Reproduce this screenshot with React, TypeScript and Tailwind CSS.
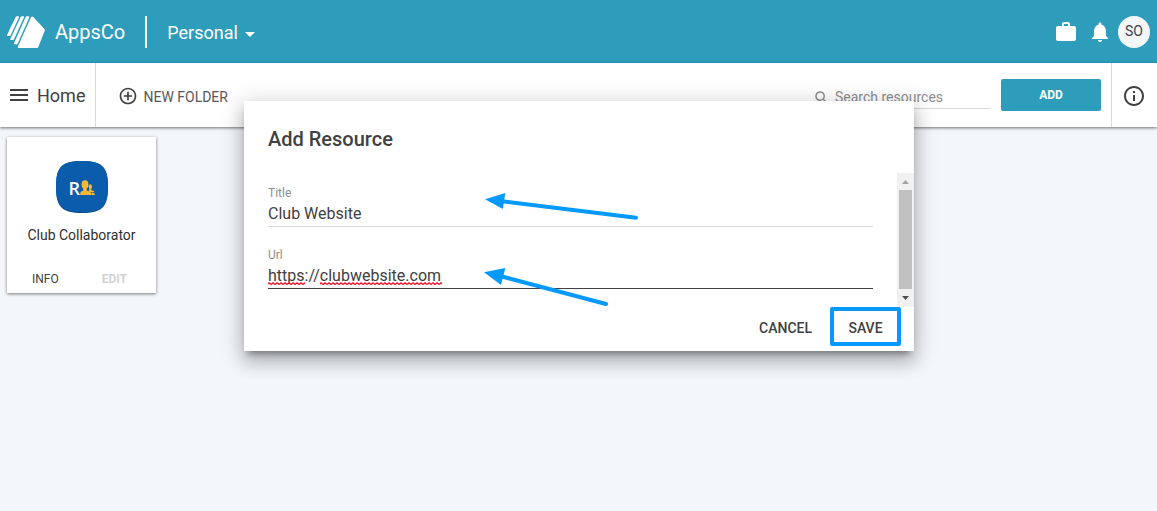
import { useState } from "react";
import type { ReactNode } from "react";

function Icon({ d, className }: { d: string; className: string }) {
  return (
    <svg viewBox="0 0 24 24" fill="currentColor" aria-hidden="true" className={className}>
      <path d={d} />
    </svg>
  );
}

const paths = {
  work: "M10 2h4c1.1 0 2 .89 2 2v2h4c1.11 0 2 .89 2 2v11c0 1.11-.89 2-2 2H4c-1.1 0-2-.89-2-2V8c0-1.1.9-2 2-2h4V4c0-1.11.89-2 2-2zm4 4V4h-4v2h4z",
  bell: "M12 22c1.1 0 2-.9 2-2h-4c0 1.1.89 2 2 2zm6-6v-5c0-3.07-1.64-5.64-4.5-6.32V4c0-.83-.67-1.5-1.5-1.5s-1.5.67-1.5 1.5v.68C7.63 5.36 6 7.92 6 11v5l-2 2v1h16v-1l-2-2z",
  menu: "M3 18h18v-2H3v2zm0-5h18v-2H3v2zm0-7v2h18V6H3z",
  addCircle:
    "M13 7h-2v4H7v2h4v4h2v-4h4v-2h-4V7zm-1-5C6.48 2 2 6.48 2 12s4.48 10 10 10 10-4.48 10-10S17.52 2 12 2zm0 18c-4.41 0-8-3.59-8-8s3.59-8 8-8 8 3.59 8 8-3.59 8-8 8z",
  info: "M11 17h2v-6h-2v6zm1-15C6.48 2 2 6.48 2 12s4.48 10 10 10 10-4.48 10-10S17.52 2 12 2zm0 18c-4.41 0-8-3.59-8-8s3.59-8 8-8 8 3.59 8 8-3.59 8-8 8zM11 9h2V7h-2v2z",
  search:
    "M15.5 14h-.79l-.28-.27C15.41 12.59 16 11.11 16 9.5 16 5.91 13.09 3 9.5 3S3 5.91 3 9.5 5.91 16 9.5 16c1.61 0 3.09-.59 4.23-1.57l.27.28v.79l5 4.99L20.49 19l-4.99-5zm-6 0C7.01 14 5 11.99 5 9.5S7.01 5 9.5 5 14 7.01 14 9.5 11.99 14 9.5 14z",
  dropDown: "M7 10l5 5 5-5z",
};

function Logo() {
  return (
    <svg viewBox="21 30 114 96" fill="#fff" aria-hidden="true" className="h-8 w-[38px]">
      <path d="M47 33q1-2 4-2h4q3 0 2 3L32 88q-1 2-3 2h-6q-3 0-2-3z" />
      <path d="M62 33q1-2 4-2h4q3 0 2 3L42 100q-1 2-3 2h-6q-3 0-2-3z" />
      <path d="M77 33q1-2 4-2h5q3 0 2 3L53 113q-1 2-3 2h-6q-3 0-2-3z" />
      <path d="M93 34q3-5 7-1l34 37q1 2 0 5l-19 48q-1 3-4 3H57q-5 0-3-5z" />
    </svg>
  );
}

function Header() {
  return (
    <header className="flex h-[63px] items-center bg-[#2e9dbb] px-[7px] text-white">
      <Logo />
      <span className="ml-[10px] text-[20px] leading-6">AppsCo</span>
      <div className="ml-5 h-8 w-[2px] bg-white" />
      <button type="button" className="ml-5 flex items-center pt-[2px] text-[18px] leading-6">
        Personal
        <Icon d={paths.dropDown} className="mt-[2px] h-6 w-6" />
      </button>
      <div className="ml-auto flex items-center">
        <button type="button" aria-label="Work">
          <Icon d={paths.work} className="h-6 w-6" />
        </button>
        <button type="button" aria-label="Notifications" className="ml-[10px]">
          <Icon d={paths.bell} className="h-6 w-6" />
        </button>
        <button
          type="button"
          className="ml-[6px] h-8 w-8 rounded-full bg-[#f3f7fa] text-[14px] text-[#414042]"
        >
          SO
        </button>
      </div>
    </header>
  );
}

function Toolbar() {
  return (
    <div className="flex h-16 bg-white shadow-[0_1px_3px_rgba(0,0,0,0.55)]">
      <div className="flex items-center border-r border-[#dadada] pr-[10px] pl-[7px]">
        <button type="button" className="flex items-center gap-[6px] text-[18px]">
          <Icon d={paths.menu} className="h-6 w-6" />
          Home
        </button>
      </div>
      <button type="button" className="ml-[22px] flex items-center gap-[5px] pt-[2px] text-[14px]">
        <Icon d={paths.addCircle} className="h-5 w-5" />
        <span className="pt-[2px] text-[#58575a]">NEW FOLDER</span>
      </button>
      <label className="mt-[22px] ml-auto flex h-6 w-[180px] items-center gap-1 border-b border-[#dadada] pt-[2px] pl-[2px] text-[#8d8d8e]">
        <Icon d={paths.search} className="h-[18px] w-[18px] shrink-0" />
        <input
          type="text"
          aria-label="Search resources"
          placeholder="Search resources"
          className="w-full min-w-0 bg-transparent text-[14px] outline-none placeholder:text-[#8d8d8e]"
        />
      </label>
      <button
        type="button"
        className="mt-4 ml-[10px] h-8 w-[100px] rounded-[2px] bg-[#2e9dbb] text-[12px] font-bold text-white"
      >
        ADD
      </button>
      <div className="ml-[10px] flex items-center border-l border-[#dadada] pt-[2px] pr-[11px] pl-[10px]">
        <button type="button" aria-label="Details">
          <Icon d={paths.info} className="h-6 w-6" />
        </button>
      </div>
    </div>
  );
}

function ResourceCard() {
  return (
    <article className="flex h-[156px] w-[149px] flex-col items-center bg-white pt-6 shadow-[0_1px_3px_rgba(0,0,0,0.5)]">
      <svg viewBox="0 0 52 52" aria-hidden="true" className="h-[52px] w-[52px]">
        <path d="M26 0C46 0 52 6 52 26S46 52 26 52 0 46 0 26 6 0 26 0z" fill="#084c8b" />
        <path d="M26 0C46 0 52 6 52 25.500S46 51 26 51 0 45.500 0 25.500 6 0 26 0z" fill="#0b5dab" />
        <text x="12.500" y="33.500" fill="#fff" fontSize="18" fontWeight="600" fontFamily="Open Sans, sans-serif">
          R
        </text>
        <g fill="#fdb92e">
          <ellipse cx="29" cy="23.500" rx="3.400" ry="4.300" />
          <path d="M27.300 25h3.400v4.500l3.300 1.200q1.500.8 1.500 3.300H24.300v-2q0-1.700 3-2.500z" />
          <ellipse cx="34.300" cy="25.600" rx="1.600" ry="2.300" />
          <path d="M33.400 26h1.800v3.200q3.400.6 3.600 2h-4.300l-1.900-1.300q.8-.8.800-2z" />
          <path d="M35.200 31.900h2.400q1.200.6 1.400 2.100h-3.400q0-1.300-.4-2.100z" />
        </g>
      </svg>
      <h2 className="mt-3 text-[14px] leading-5 text-[#303030]">Club Collaborator</h2>
      <div className="mt-6 flex w-full justify-between pr-[29px] pl-[25px] text-[12px] leading-5">
        <button type="button">INFO</button>
        <button type="button" disabled className="font-bold text-[#d3d3d3]">
          EDIT
        </button>
      </div>
    </article>
  );
}

function Field({
  id,
  label,
  value,
  focused,
  onChange,
  children,
}: {
  id: string;
  label: string;
  value: string;
  focused?: boolean;
  onChange: (value: string) => void;
  children?: ReactNode;
}) {
  return (
    <div
      className={
        focused
          ? "relative flex h-[54px] flex-col border-b border-[#414042]"
          : "relative flex h-[54px] flex-col border-b border-[#dadada]"
      }
    >
      <label htmlFor={id} className="pt-[10px] text-[12px] leading-5 text-[#8d8d8e]">
        {label}
      </label>
      <input
        id={id}
        type="text"
        value={value}
        onChange={(event) => onChange(event.target.value)}
        className="h-[22px] w-full bg-transparent text-[16px] leading-[22px] outline-none"
      />
      {children}
    </div>
  );
}

function SpellingMarks() {
  return (
    <svg aria-hidden="true" className="pointer-events-none absolute bottom-[3px] left-0 h-[3px] w-[178px]">
      <defs>
        <pattern id="squiggle" width="4" height="3" patternUnits="userSpaceOnUse">
          <path d="M-1 3L1 .7L3 2.500L5 .7" fill="none" stroke="#f0182d" strokeWidth="1.200" />
        </pattern>
      </defs>
      <rect width="37" height="3" fill="url(#squiggle)" />
      <rect x="52" width="122" height="3" fill="url(#squiggle)" />
    </svg>
  );
}

function Scrollbar() {
  return (
    <div aria-hidden="true" className="flex w-[17px] flex-col items-center bg-[#f1f1f1]">
      <svg viewBox="0 0 17 17" className="h-[17px] w-[17px]">
        <path d="M5 11h7L8.500 7z" fill="#a3a3a3" />
      </svg>
      <div className="w-[13px] grow bg-[#c1c1c1]" />
      <svg viewBox="0 0 17 18" className="h-[18px] w-[17px]">
        <path d="M5 7h7l-3.500 4z" fill="#505050" />
      </svg>
    </div>
  );
}

function Arrows() {
  return (
    <svg
      viewBox="0 0 160 120"
      aria-hidden="true"
      className="pointer-events-none absolute top-[89px] left-[236px] h-[120px] w-[160px]"
    >
      <g fill="#0499ff" stroke="#0499ff">
        <path d="M22 11.200L156 27.800" strokeWidth="4" strokeLinecap="round" />
        <path d="M5 9.300L25.300 3 22.800 19z" stroke="none" />
        <path d="M22 86.500L126 114" strokeWidth="4" strokeLinecap="round" />
        <path d="M4 82.300L25.300 78 21 95z" stroke="none" />
      </g>
    </svg>
  );
}

function AddResourceDialog() {
  const [title, setTitle] = useState("Club Website");
  const [url, setUrl] = useState("https://clubwebsite.com");

  return (
    <div className="absolute inset-x-0 top-[101px] flex justify-center pl-px">
      <form
        role="dialog"
        aria-labelledby="dialog-title"
        onSubmit={(event) => event.preventDefault()}
        className="relative w-full max-w-[670px] bg-white shadow-[0_12px_16px_1px_rgba(0,0,0,0.16),0_4px_22px_3px_rgba(0,0,0,0.16),0_6px_7px_-4px_rgba(0,0,0,0.4)]"
      >
        <h1 id="dialog-title" className="px-6 pt-6 text-[20px] leading-7 font-medium">
          Add Resource
        </h1>
        <div className="mt-5 flex h-[134px]">
          <div className="flex min-w-0 grow flex-col gap-2 px-6">
            <Field id="title" label="Title" value={title} onChange={setTitle} />
            <Field id="url" label="Url" value={url} onChange={setUrl} focused>
              <SpellingMarks />
            </Field>
          </div>
          <Scrollbar />
        </div>
        <div className="flex items-start justify-end gap-[18px] pr-[13px] pb-[5px] text-[14px] font-medium">
          <button type="button" className="h-[39px] pt-[3px]">
            CANCEL
          </button>
          <button type="submit" className="h-[39px] w-[71px] rounded-[2px] border-4 border-[#0499ff] pt-[3px]">
            SAVE
          </button>
        </div>
        <Arrows />
      </form>
    </div>
  );
}

export default function App() {
  return (
    <div className="relative min-h-screen bg-[#f3f7fa] font-['Roboto',sans-serif] text-[#414042]">
      <Header />
      <Toolbar />
      <main className="flex flex-wrap gap-2 px-[7px] pt-[10px]">
        <ResourceCard />
      </main>
      <AddResourceDialog />
    </div>
  );
}
